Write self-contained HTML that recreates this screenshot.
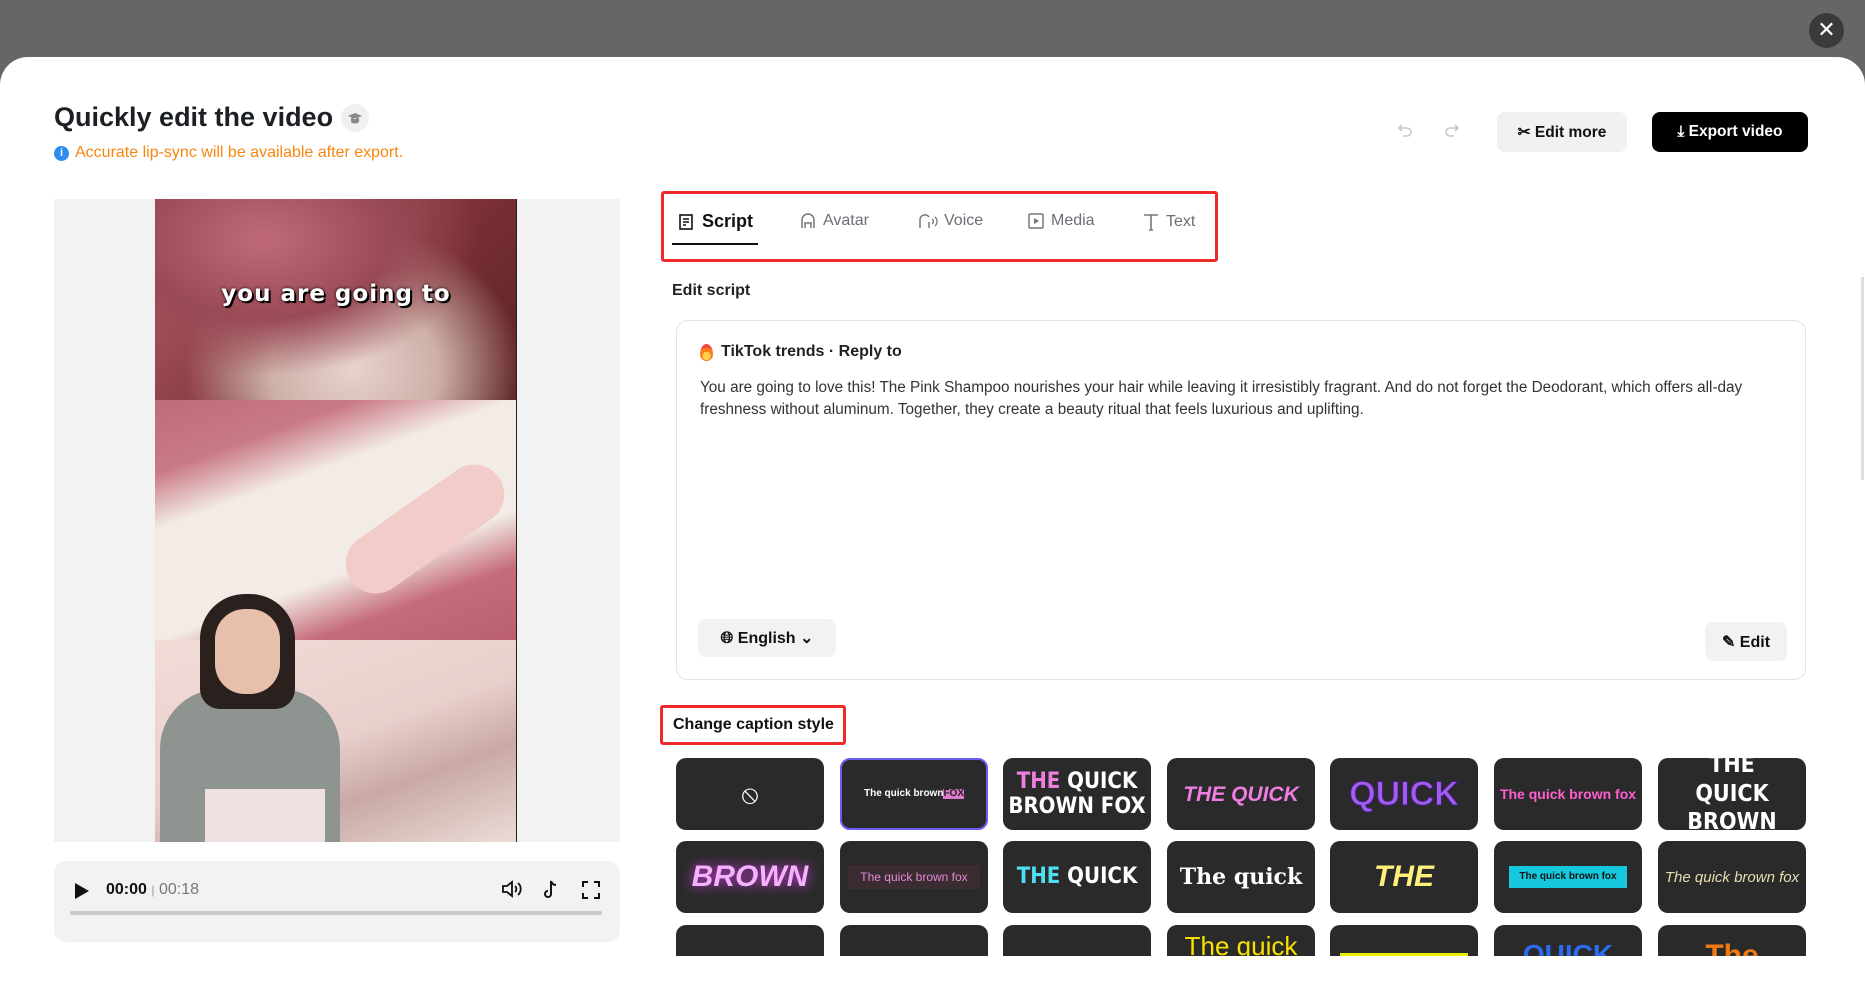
<!DOCTYPE html>
<html><head><meta charset="utf-8">
<style>
*{box-sizing:border-box;margin:0;padding:0}
body{width:1865px;height:969px;overflow:hidden;background:#666;font-family:"Liberation Sans",sans-serif;position:relative;color:#111}
.abs{position:absolute}
.modal{position:absolute;left:0;top:57px;width:1865px;height:940px;background:#fff;border-radius:28px 28px 0 0}
.close{left:1809px;top:13px;width:35px;height:35px;border-radius:50%;background:#3a3a3a;color:#fff;font-size:22px;text-align:center;line-height:34px}
.title{left:54px;top:102px;font-size:27px;font-weight:bold;color:#1c1f23}
.cap{left:341px;top:104px;width:28px;height:28px;border-radius:50%;background:#f0f0f0}
.info{left:54px;top:144px;font-size:16px;color:#f7860f;display:flex;align-items:center;gap:6px}
.info i{display:inline-block;width:15px;height:15px;border-radius:50%;background:#2d8cf0;color:#fff;font-size:11px;font-style:normal;text-align:center;line-height:15px;font-weight:bold}
.btn{top:112px;height:40px;border-radius:8px;font-size:16px;font-weight:bold;display:flex;align-items:center;justify-content:center;gap:7px}
.vp{left:54px;top:199px;width:566px;height:643px;background:#f2f2f2}
.vid{left:155px;top:199px;width:362px;height:643px;overflow:hidden;border-right:1px solid #222}
.ctrl{left:54px;top:861px;width:566px;height:81px;background:#f2f2f2;border-radius:12px}
.tabs{left:661px;top:191px;width:557px;height:71px;border:3px solid #ee2a2a;border-radius:3px}
.tab{top:212px;font-size:16px;color:#6b6f75;display:flex;align-items:center;gap:6px}
.box{left:676px;top:320px;width:1130px;height:360px;border:1px solid #e3e3e3;border-radius:12px}
.grid{left:676px;top:758px;width:1140px;height:198px;overflow:hidden}
.tile{position:absolute;width:148px;height:72px;background:#2a2a2a;border-radius:10px;overflow:hidden;display:flex;align-items:center;justify-content:center;font-weight:bold;text-align:center;line-height:1}
</style></head><body>
<div class="abs close">✕</div>
<div class="modal"></div>
<div class="abs title">Quickly edit the video</div>
<div class="abs cap"><svg width="28" height="28" viewBox="0 0 28 28"><path d="M7 12l7-3 7 3-7 3z M10 14v4c2 2 6 2 8 0v-4" fill="#888"/></svg></div>
<div class="abs info"><i>i</i>Accurate lip-sync will be available after export.</div>

<svg class="abs" style="left:1397px;top:122px" width="18" height="18" viewBox="0 0 18 18"><path d="M5 3L2 6l3 3M2 6h8a4 4 0 010 8H6" fill="none" stroke="#c8c8c8" stroke-width="1.6"/></svg>
<svg class="abs" style="left:1442px;top:122px" width="18" height="18" viewBox="0 0 18 18"><path d="M13 3l3 3-3 3M16 6H8a4 4 0 000 8h4" fill="none" stroke="#c8c8c8" stroke-width="1.6"/></svg>
<div class="abs btn" style="left:1497px;width:130px;background:#f1f1f1;color:#111;font-size:15.5px">✂ Edit more</div>
<div class="abs btn" style="left:1652px;width:156px;background:#000;color:#fff;font-size:15.5px">⤓ Export video</div>

<div class="abs vp"></div>
<div class="abs vid">
 <div class="abs" style="left:0;top:0;width:362px;height:201px;background:radial-gradient(ellipse at 30% 20%,#c06a78 0,#9a4a55 35%,transparent 60%),radial-gradient(ellipse at 55% 85%,#e8d2cc 0,#cdb0a8 30%,transparent 60%),linear-gradient(135deg,#b9606c,#7a3035 60%,#5a2020)"></div>
 <div class="abs" style="left:0;top:82px;width:362px;text-align:center;color:#fff;font-size:23px;font-weight:bold;font-family:'DejaVu Sans',sans-serif;letter-spacing:1px;text-shadow:0 0 3px #000,2px 2px 0 #000">you are going to</div>
 <div class="abs" style="left:0;top:201px;width:362px;height:240px;background:linear-gradient(160deg,#c06a78 0,#c97a86 20%,#f3ebe6 35%,#f3ece6 65%,#c56c7a 80%,#b95f6e)"></div>
 <div class="abs" style="left:180px;top:300px;width:180px;height:60px;background:#f2ccc8;border-radius:30px;transform:rotate(-35deg)"></div>
 <div class="abs" style="left:0;top:441px;width:362px;height:202px;background:linear-gradient(160deg,#f2dcd8,#e8cfcc 50%,#c9a9a5 70%,#ebdcd8)"></div>
 <div class="abs" style="left:5px;top:490px;width:180px;height:153px;background:#8e9490;border-radius:60px 60px 0 0"></div>
 <div class="abs" style="left:45px;top:395px;width:95px;height:115px;background:#2a201e;border-radius:45px 45px 20px 20px"></div>
 <div class="abs" style="left:60px;top:410px;width:65px;height:85px;background:#e6c0aa;border-radius:30px"></div>
 <div class="abs" style="left:50px;top:590px;width:120px;height:53px;background:#eee0de"></div>
</div>
<div class="abs ctrl">
 <svg class="abs" style="left:20px;top:21px" width="16" height="18"><path d="M1 1l14 8-14 8z" fill="#111"/></svg>
 <div class="abs" style="left:52px;top:20px;font-size:16px;font-weight:bold">00:00 <span style="color:#999;font-weight:normal;font-size:12px">|</span> <span style="color:#777;font-weight:normal">00:18</span></div>
 <svg class="abs" style="left:447px;top:18px" width="22" height="20"><path d="M2 7h4l5-4v14l-5-4H2z" fill="none" stroke="#111" stroke-width="1.8"/><path d="M14 7a4 4 0 010 6M17 4a8 8 0 010 12" fill="none" stroke="#111" stroke-width="1.8"/></svg>
 <svg class="abs" style="left:488px;top:19px" width="18" height="20"><path d="M9 1v13a3 3 0 11-3-3M9 1c1 3 3 4 5 4" fill="none" stroke="#111" stroke-width="2"/></svg>
 <svg class="abs" style="left:528px;top:20px" width="18" height="18"><path d="M1 6V1h5M12 1h5v5M17 12v5h-5M6 17H1v-5" fill="none" stroke="#111" stroke-width="2"/></svg>
 <div class="abs" style="left:16px;top:50px;width:532px;height:4px;background:#c9c9c9;border-radius:2px"></div>
</div>

<div class="abs tabs"></div>
<div class="abs tab" style="left:678px;top:211px;color:#111;font-weight:bold;font-size:18px"><svg width="18" height="18"><rect x="2" y="2" width="12" height="14" fill="none" stroke="#111" stroke-width="1.6"/><path d="M5 6h6M5 9h6M5 12h3" stroke="#111" stroke-width="1.4"/></svg>Script</div>
<div class="abs" style="left:672px;top:243px;width:86px;height:2px;background:#111"></div>
<div class="abs tab" style="left:799px"><svg width="18" height="18"><path d="M3 16V8a6 6 0 0112 0v8M6 16v-5h6v5" fill="none" stroke="#777" stroke-width="1.5"/></svg>Avatar</div>
<div class="abs tab" style="left:916px"><svg width="22" height="18"><path d="M4 16V7a5 5 0 019-2M13 10l0 6" fill="none" stroke="#777" stroke-width="1.5"/><path d="M16 7a3 3 0 010 5M19 5a6 6 0 010 9" fill="none" stroke="#777" stroke-width="1.3"/></svg>Voice</div>
<div class="abs tab" style="left:1027px"><svg width="18" height="18"><rect x="2" y="2" width="14" height="14" rx="1" fill="none" stroke="#777" stroke-width="1.5"/><path d="M7 6l5 3-5 3z" fill="#777"/></svg>Media</div>
<div class="abs tab" style="left:1142px"><svg width="18" height="20"><path d="M2 3h14M9 3v15M7 18h4" fill="none" stroke="#777" stroke-width="1.6"/></svg>Text</div>

<div class="abs" style="left:672px;top:282px;font-size:16px;font-weight:bold;color:#222">Edit script</div>
<div class="abs box"></div>
<div class="abs" style="left:700px;top:343px;font-size:16px;color:#222;font-weight:bold;display:flex;gap:8px;align-items:center"><span style="display:inline-block;width:13px;height:17px;background:radial-gradient(circle at 50% 70%,#ffd24a 0 30%,#ff7a1a 31% 60%,#e44 61%);border-radius:50% 50% 50% 50%/60% 60% 40% 40%"></span>TikTok trends · Reply to</div>
<div class="abs" style="left:700px;top:377px;width:1072px;font-size:15.3px;line-height:22px;color:#333">You are going to love this! The Pink Shampoo nourishes your hair while leaving it irresistibly fragrant. And do not forget the Deodorant, which offers all-day freshness without aluminum. Together, they create a beauty ritual that feels luxurious and uplifting.</div>
<div class="abs" style="left:698px;top:619px;width:138px;height:38px;background:#f2f2f2;border-radius:8px;font-size:16px;font-weight:bold;display:flex;align-items:center;justify-content:center;gap:8px">🌐︎ English ⌄</div>
<div class="abs" style="left:1705px;top:622px;width:82px;height:39px;background:#f2f2f2;border-radius:8px;font-size:16px;font-weight:bold;display:flex;align-items:center;justify-content:center;gap:7px">✎ Edit</div>

<div class="abs" style="left:660px;top:705px;width:186px;height:40px;border:3px solid #ee2a2a;border-radius:3px"></div>
<div class="abs" style="left:673px;top:716px;font-size:16px;font-weight:bold">Change caption style</div>

<div class="abs grid">
 <div class="tile" style="left:0;top:0;color:#fff;font-size:26px;font-weight:normal">⦸</div>
 <div class="tile" style="left:164px;top:0;border:2px solid #6b5cf0;color:#fff;font-size:10px">The quick brown <span style="background:#e07ad0;color:#222">FOX</span></div>
 <div class="tile" style="left:327px;top:0;color:#fff;font-size:22px;font-family:'DejaVu Sans Condensed',sans-serif"><span style="line-height:1.15"><span style="color:#f07de0">THE</span> QUICK<br>BROWN FOX</span></div>
 <div class="tile" style="left:491px;top:0;color:#f07de0;font-size:21px;font-style:italic">THE QUICK</div>
 <div class="tile" style="left:654px;top:0;color:#a35cf0;font-size:34px;-webkit-text-stroke:1px #40207a">QUICK</div>
 <div class="tile" style="left:818px;top:0;color:#ff5fd0;font-size:14px">The quick brown fox</div>
 <div class="tile" style="left:982px;top:0;color:#fff;font-size:23px;font-family:'DejaVu Sans Condensed',sans-serif"><span style="line-height:1.25">THE<br>QUICK<br>BROWN</span></div>
 <div class="tile" style="left:0;top:83px;color:#f6b0ff;font-size:30px;font-style:italic;text-shadow:0 0 12px #d040e0">BROWN</div>
 <div class="tile" style="left:164px;top:83px;color:#e28ad6;font-size:12px;font-weight:normal"><span style="background:#3a2c30;padding:6px 12px">The quick brown fox</span></div>
 <div class="tile" style="left:327px;top:83px;color:#fff;font-size:22px;font-family:'DejaVu Sans Condensed',sans-serif"><span><span style="color:#4ee0f0">THE</span> QUICK</span></div>
 <div class="tile" style="left:491px;top:83px;color:#fff;font-size:22px;font-family:'DejaVu Serif',serif">The quick</div>
 <div class="tile" style="left:654px;top:83px;color:#fff07a;font-size:30px;font-style:italic">THE</div>
 <div class="tile" style="left:818px;top:83px;color:#111;font-size:10px"><span style="background:#16c8dc;padding:6px 10px">The quick brown fox</span></div>
 <div class="tile" style="left:982px;top:83px;color:#e8dcb0;font-size:15px;font-style:italic;font-weight:normal">The quick brown fox</div>
 <div class="tile" style="left:0;top:167px"></div>
 <div class="tile" style="left:164px;top:167px"></div>
 <div class="tile" style="left:327px;top:167px"></div>
 <div class="tile" style="left:491px;top:167px;color:#f5e000;font-size:26px;font-weight:normal;align-items:flex-start;padding-top:8px">The quick</div>
 <div class="tile" style="left:654px;top:167px"><div style="position:absolute;left:10px;top:28px;width:128px;height:10px;background:#e8f000"></div></div>
 <div class="tile" style="left:818px;top:167px;color:#2a6cf0;font-size:28px;align-items:flex-start;padding-top:16px">QUICK</div>
 <div class="tile" style="left:982px;top:167px;color:#f07a10;font-size:30px;align-items:flex-start;padding-top:16px">The</div>
</div>
<div class="abs" style="left:1861px;top:277px;width:3px;height:203px;background:#ddd"></div>
</body></html>
